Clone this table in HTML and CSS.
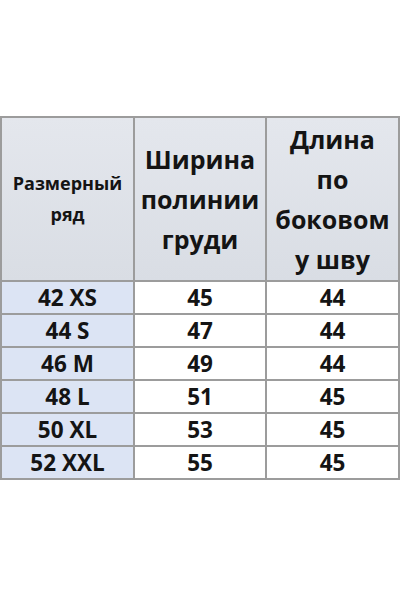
FILE: index.html
```html
<!DOCTYPE html>
<html lang="ru">
<head>
<meta charset="utf-8">
<link rel="stylesheet" href="styles.css">
</head>
<body>
<div class="page">
<table class="sizes">
  <colgroup>
    <col class="c1"><col class="c2"><col class="c3">
  </colgroup>
  <thead>
    <tr>
      <th class="h-small">Размерный<br>ряд</th>
      <th class="h-big">Ширина<br>полинии<br>груди</th>
      <th class="h-big">Длина<br>по<br>боковом<br>у шву</th>
    </tr>
  </thead>
  <tbody>
    <tr><td class="size">42 XS</td><td>45</td><td>44</td></tr>
    <tr><td class="size">44 S</td><td>47</td><td>44</td></tr>
    <tr><td class="size">46 M</td><td>49</td><td>44</td></tr>
    <tr><td class="size">48 L</td><td>51</td><td>45</td></tr>
    <tr><td class="size">50 XL</td><td>53</td><td>45</td></tr>
    <tr><td class="size">52 XXL</td><td>55</td><td>45</td></tr>
  </tbody>
</table>
</div>
</body>
</html>
```

FILE: styles.css
```css
html, body {
  margin: 0;
  padding: 0;
  background: #ffffff;
}
.page {
  width: 400px;
  height: 600px;
  padding-top: 116px;
  box-sizing: border-box;
}
.sizes {
  border-collapse: collapse;
  width: 398px;
  table-layout: fixed;
  font-family: "Open Sans", Lato, sans-serif;
  font-weight: 700;
  color: #141414;
}
.c1 { width: 133px; }
.c2 { width: 132px; }
.c3 { width: 133px; }
.sizes th, .sizes td {
  border: 2px solid #9c9c9c;
  text-align: center;
  padding: 0;
}
.sizes thead th {
  height: 162px;
  background: linear-gradient(#e4e7ed, #d9dde4);
}
.h-small {
  font-size: 18px;
  line-height: 31px;
  font-weight: 700;
  padding-top: 4px;
}
.h-big {
  font-size: 25px;
  line-height: 40px;
  font-weight: 700;
}
.sizes tbody td {
  height: 31px;
  font-size: 22.5px;
  line-height: 31px;
  background: #ffffff;
}
.sizes tbody td.size {
  background: #dce4f4;
}
```
